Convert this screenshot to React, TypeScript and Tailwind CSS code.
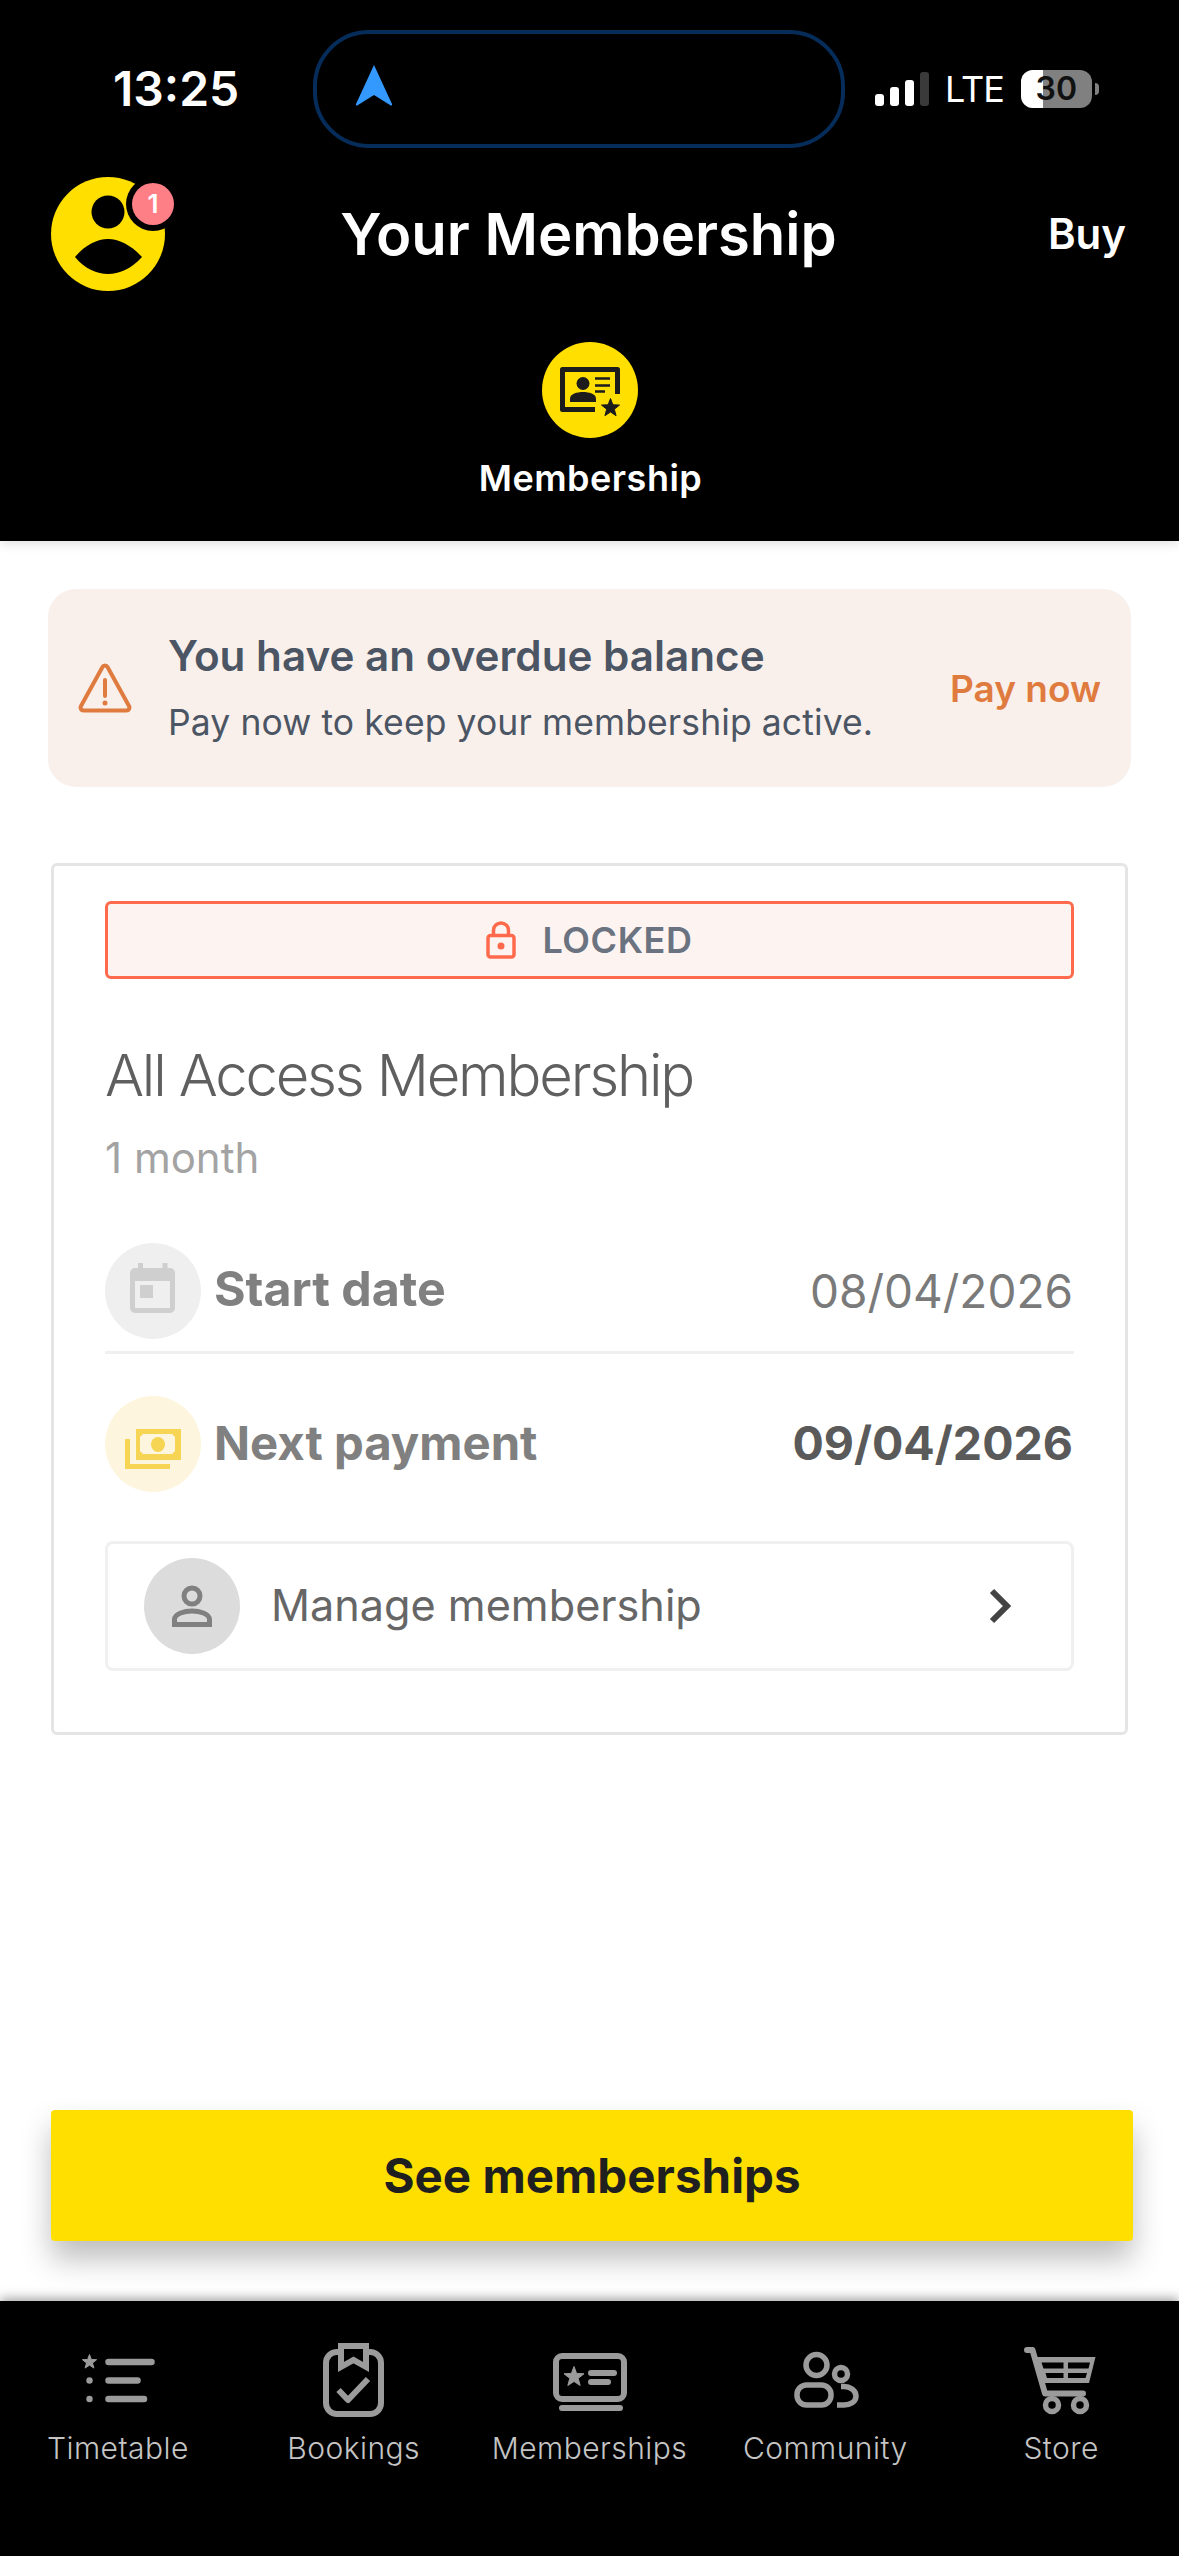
import React from "react";

const Star = ({ cx, cy, r, fill }: { cx: number; cy: number; r: number; fill: string }) => {
  const pts: string[] = [];
  for (let i = 0; i < 10; i++) {
    const rad = i % 2 === 0 ? r : r * 0.42;
    const a = (-90 + i * 36) * (Math.PI / 180);
    pts.push(`${(cx + rad * Math.cos(a)).toFixed(2)},${(cy + rad * Math.sin(a)).toFixed(2)}`);
  }
  return <polygon points={pts.join(" ")} fill={fill} strokeLinejoin="round" stroke={fill} strokeWidth={1} />;
};

const G = "#9b9b9b";

const TimetableIcon = () => (
  <svg width="96" height="96" viewBox="0 0 96 96" fill="none">
    <Star cx={19.5} cy={32} r={7.5} fill={G} />
    <circle cx="19.5" cy="50.5" r="3.2" fill={G} />
    <circle cx="19.5" cy="69" r="3.2" fill={G} />
    <path d="M38.5 32H81.5M38.5 50.5H67.5M38.5 69H74" stroke={G} strokeWidth="6.5" strokeLinecap="round" />
  </svg>
);

const BookingsIcon = () => (
  <svg width="96" height="96" viewBox="0 0 96 96" fill="none">
    <rect x="20" y="22" width="55" height="62" rx="11" stroke={G} strokeWidth="6" />
    <path d="M35 16H60V37L47.5 30L35 37Z" fill="#000" stroke={G} strokeWidth="6" />
    <path d="M32.5 60L42 70L62 49" stroke={G} strokeWidth="6" strokeLinejoin="round" />
  </svg>
);

const MembershipsIcon = () => (
  <svg width="96" height="96" viewBox="0 0 96 96" fill="none">
    <rect x="15" y="26" width="68" height="43" rx="6" stroke={G} strokeWidth="6" />
    <path d="M21 78H79M50 43H73M50 52H67" stroke={G} strokeWidth="6" strokeLinecap="round" />
    <Star cx={33} cy={47} r={10.5} fill={G} />
  </svg>
);

const CommunityIcon = () => (
  <svg width="96" height="96" viewBox="0 0 96 96" fill="none">
    <circle cx="39.5" cy="35" r="10.5" stroke={G} strokeWidth="5.5" />
    <circle cx="64" cy="44" r="6.5" stroke={G} strokeWidth="5.5" />
    <rect x="20" y="55" width="34" height="20" rx="9.5" stroke={G} strokeWidth="5.5" />
    <path d="M64 56.5H67C72.5 56.5 79 60 79 66C79 72 73 75 67 75H60" stroke={G} strokeWidth="5.5" />
  </svg>
);

const StoreIcon = () => (
  <svg width="96" height="96" viewBox="0 0 96 96" fill="none">
    <path d="M14 20H19.5L32 63.5H70" stroke={G} strokeWidth="6" strokeLinecap="round" strokeLinejoin="round" />
    <path d="M21 27H82.5L76 53H28Z" fill={G} />
    <path d="M28.5 32.5H50.5V38.5H30.5ZM55 32.5H77L75.5 38.5H55ZM32.5 43H50.5V48H34ZM55 43H74L72.5 48H55Z" fill="#000" />
    <circle cx="39" cy="75" r="6.5" stroke={G} strokeWidth="5.5" />
    <circle cx="67" cy="75" r="6.5" stroke={G} strokeWidth="5.5" />
  </svg>
);

const navItems = [
  { label: "Timetable", Icon: TimetableIcon },
  { label: "Bookings", Icon: BookingsIcon },
  { label: "Memberships", Icon: MembershipsIcon },
  { label: "Community", Icon: CommunityIcon },
  { label: "Store", Icon: StoreIcon },
];

const MemberBadgeIcon = () => (
  <svg width="96" height="96" viewBox="0 0 96 96" fill="none">
    <path d="M53 67.5H20.5V27.5H75.5V52" stroke="#1c1c1c" strokeWidth="5" strokeLinejoin="round" />
    <circle cx="41" cy="41.5" r="6.5" fill="#1c1c1c" />
    <path d="M28 60V56.5C28 52 35 50 41 50C47 50 54 52 54 56.5V60Z" fill="#1c1c1c" />
    <path d="M53 36.5H68M53 43.5H68M53 49.5H63" stroke="#1c1c1c" strokeWidth="2.6" />
    <Star cx={68.5} cy={66} r={9.5} fill="#1c1c1c" />
  </svg>
);

const CalendarIcon = () => (
  <svg width="96" height="96" viewBox="0 0 96 96" fill="none">
    <rect x="27.5" y="27.5" width="40" height="40" rx="2.5" stroke="#cfcfcf" strokeWidth="5" />
    <path d="M25 29H70V38H25Z" fill="#cfcfcf" />
    <path d="M33 20H38V28H33ZM57.5 20H62.5V28H57.5Z" fill="#cfcfcf" />
    <rect x="35" y="42" width="13" height="13" fill="#cfcfcf" />
  </svg>
);

const MoneyIcon = () => (
  <svg width="96" height="96" viewBox="0 0 96 96" fill="none">
    <path d="M31 33H76V64H31Z" fill="#f6d555" />
    <path d="M38 38H67L70 41V55L67 58H38L35 55V41Z" fill="#fdf5dd" />
    <ellipse cx="53" cy="48.5" rx="7" ry="7.5" fill="#f6d555" />
    <path d="M22.5 43V70.5H65" stroke="#f6d555" strokeWidth="5" />
  </svg>
);

const PersonIcon = () => (
  <svg width="96" height="96" viewBox="0 0 96 96" fill="none">
    <circle cx="48" cy="38" r="8" stroke="#808080" strokeWidth="5" />
    <path d="M30.5 66.5V61.5C30.5 55.5 41 53 48 53C55 53 65.5 55.5 65.5 61.5V66.5Z" stroke="#808080" strokeWidth="5" />
  </svg>
);

const Row = ({
  icon,
  bg,
  label,
  value,
  labelClass,
  valueClass,
}: {
  icon: React.ReactNode;
  bg: string;
  label: string;
  value: string;
  labelClass: string;
  valueClass: string;
}) => (
  <div className="flex items-center justify-between">
    <div className="flex items-center gap-[13px]">
      <div className={`w-[96px] h-[96px] rounded-full ${bg}`}>{icon}</div>
      <span className={`font-bold text-[#808080] leading-none mb-[3px] ${labelClass}`}>{label}</span>
    </div>
    <span className={`leading-none mb-[1px] mr-[1px] ${valueClass}`}>{value}</span>
  </div>
);

export default function App() {
  return (
    <div
      className="w-[1179px] h-[2556px] flex flex-col bg-white overflow-hidden"
      style={{ fontFamily: "Inter, 'Noto Sans', sans-serif" }}
    >
      {/* Header */}
      <header className="relative z-10 h-[541px] bg-black flex flex-col shadow-[0_3px_10px_rgba(0,0,0,0.12)]">
        <div className="flex items-center h-[118px] mt-[30px]">
          <span className="ml-[113px] w-[200px] text-[48px] font-semibold text-white leading-none">13:25</span>
          <div className="w-[532px] h-[118px] rounded-[56px] border-[4px] border-[#062c5a] flex items-center pl-[37px]">
            <svg width="40" height="42" viewBox="0 0 40 42" className="mb-[8px]">
              <path d="M20 1L38 40C38.500 41.500 37 42 36 41L20 31L4 41C3 42 1.500 41.500 2 40Z" fill="#3399ff" />
            </svg>
          </div>
          <div className="ml-[30px] flex items-end gap-[6px] h-[34px]">
            <div className="w-[9px] h-[12px] rounded-[3px] bg-white" />
            <div className="w-[9px] h-[19px] rounded-[3px] bg-white" />
            <div className="w-[9px] h-[26px] rounded-[3px] bg-white" />
            <div className="w-[9px] h-[34px] rounded-[3px] bg-[#3a3a3a]" />
          </div>
          <span className="ml-[16px] text-[36px] font-normal text-white leading-none tracking-[-1px]">LTE</span>
          <div className="relative ml-[17px] w-[71px] h-[38px] rounded-[12px] bg-[#808080] overflow-hidden flex items-center justify-center">
            <div className="absolute left-0 top-0 bottom-0 w-[22px] bg-white" />
            <span className="relative text-[32px] font-semibold text-[#111] leading-none">30</span>
          </div>
          <div className="ml-[3px] w-[4px] h-[12px] rounded-r-full bg-[#808080]" />
        </div>

        <div className="grid grid-cols-[1fr_auto_1fr] items-center mt-[29px] h-[114px] pl-[51px] pr-[53px]">
          <div className="relative w-[114px] h-[114px]">
            <svg width="114" height="114" viewBox="0 0 114 114">
              <circle cx="57" cy="57" r="57" fill="#ffdf00" />
              <circle cx="57" cy="35" r="16.500" fill="#000" />
              <path d="M24 80C34 68 46 62 57 62C68 62 80 68 91 80C80 92 68 97 57 97C46 97 34 92 24 80Z" fill="#000" />
            </svg>
            <div className="absolute left-[75px] top-0 w-[54px] h-[54px] rounded-full bg-black flex items-center justify-center">
              <div className="w-[42px] h-[42px] rounded-full bg-[#ff7f87] flex items-center justify-center text-[26px] font-semibold text-white leading-none">
                1
              </div>
            </div>
          </div>
          <h1 className="text-[58px] font-semibold text-white leading-none whitespace-nowrap">Your Membership</h1>
          <span className="justify-self-end text-[42px] font-semibold text-white leading-none">Buy</span>
        </div>

        <div className="flex flex-col items-center mt-[51px]">
          <div className="w-[96px] h-[96px] rounded-full bg-[#ffdf00]">
            <MemberBadgeIcon />
          </div>
          <span className="mt-[18px] pl-[2px] text-[36px] font-semibold text-white leading-[44px] tracking-[0.5px]">Membership</span>
        </div>
      </header>

      {/* Main */}
      <main className="flex-1 flex flex-col">
        <div className="mx-[48px] mt-[48px] h-[198px] rounded-[28px] bg-[#f9f0ec] flex items-center pl-[30px] pr-[30px]">
          <svg width="54" height="50" viewBox="0 0 54 50" fill="none" className="shrink-0">
            <path
              d="M24.500 4L3 43C2 45 3 47.500 5.500 47.500H48.500C51 47.500 52 45 51 43L29.500 4C28.500 2 25.500 2 24.500 4Z"
              stroke="#e07b40"
              strokeWidth="4"
              strokeLinejoin="round"
            />
            <path d="M27 17V33" stroke="#e07b40" strokeWidth="4" strokeLinecap="round" />
            <circle cx="27" cy="40" r="2.500" fill="#e07b40" />
          </svg>
          <div className="ml-[36px] flex-1 flex flex-col">
            <span className="text-[42.200px] font-semibold text-[#4b5563] leading-[50px] mb-[6px]">You have an overdue balance</span>
            <span className="mt-[14px] text-[35.500px] text-[#4b5563] leading-[44px] tracking-[0.1px]">
              Pay now to keep your membership active.
            </span>
          </div>
          <span className="text-[37px] font-semibold text-[#e07b40] leading-none whitespace-nowrap">Pay now</span>
        </div>

        <div className="mx-[51px] mt-[76px] h-[872px] border-[3px] border-[#e5e5e5] rounded-[6px] px-[51px] pt-[35px]">
          <div className="h-[78px] border-[3px] border-[#ff6a4d] bg-[#fdf4f1] rounded-[6px] flex items-center justify-center gap-[26px]">
            <svg width="30" height="38" viewBox="0 0 30 38" fill="none">
              <rect x="2" y="14.500" width="26" height="21.500" rx="2.500" stroke="#ff6a4d" strokeWidth="3.500" />
              <path d="M7.500 14V9.500C7.500 5 11 2 15 2C19 2 22.500 5 22.500 9.500V14" stroke="#ff6a4d" strokeWidth="3.500" />
              <circle cx="15" cy="25" r="3.500" fill="#ff6a4d" />
            </svg>
            <span className="text-[36px] font-semibold text-[#6b7280] leading-none tracking-[0.6px]">LOCKED</span>
          </div>

          <h2 className="mt-[61px] text-[58px] font-light text-[#5f5f5f] leading-[70px] tracking-[-2.200px] whitespace-nowrap">
            All Access Membership
          </h2>
          <p className="mt-[24px] text-[42px] text-[#a3a3a3] leading-[48px]">1 month</p>

          <div className="mt-[61px] pb-[12px] border-b-[3px] border-[#f0f0f0]">
            <Row
              icon={<CalendarIcon />}
              bg="bg-[#efefef]"
              label="Start date"
              labelClass="text-[48.300px]"
              value="08/04/2026"
              valueClass="text-[46px] font-normal text-[#7a7a7a]"
            />
          </div>
          <div className="mt-[42px]">
            <Row
              icon={<MoneyIcon />}
              bg="bg-[#fdf5dd]"
              label="Next payment"
              labelClass="text-[47.300px]"
              value="09/04/2026"
              valueClass="text-[46.500px] font-bold text-[#5a5a5a]"
            />
          </div>

          <div className="mt-[49px] h-[130px] border-[3px] border-[#f0f0f0] rounded-[8px] flex items-center pl-[36px] pr-[56px]">
            <div className="w-[96px] h-[96px] rounded-full bg-[#dcdcdc]">
              <PersonIcon />
            </div>
            <span className="ml-[31px] flex-1 text-[43.200px] text-[#666666] leading-none">Manage membership</span>
            <svg width="26" height="38" viewBox="0 0 26 38" fill="none" className="mr-[2px]">
              <path d="M5 4L20 19L5 34" stroke="#444444" strokeWidth="6" />
            </svg>
          </div>
        </div>

        <div className="mt-auto mb-[60px] ml-[51px] mr-[46px]">
          <button className="w-full h-[131px] rounded-[4px] bg-[#ffdf00] text-[47.500px] font-bold text-[#1f1f1f] leading-none shadow-[0_18px_30px_rgba(0,0,0,0.26)]">
            See memberships
          </button>
        </div>
      </main>

      {/* Bottom navigation */}
      <nav className="relative h-[255px] bg-black grid grid-cols-5 shadow-[0_-3px_10px_rgba(0,0,0,0.35)]">
        {navItems.map(({ label, Icon }) => (
          <div key={label} className="flex flex-col items-center pt-[29px]">
            <Icon />
            <span className="mt-[4px] text-[30px] text-[#c4c4c4] leading-[36px] tracking-[0.45px] whitespace-nowrap font-light">
              {label}
            </span>
          </div>
        ))}
      </nav>
    </div>
  );
}
